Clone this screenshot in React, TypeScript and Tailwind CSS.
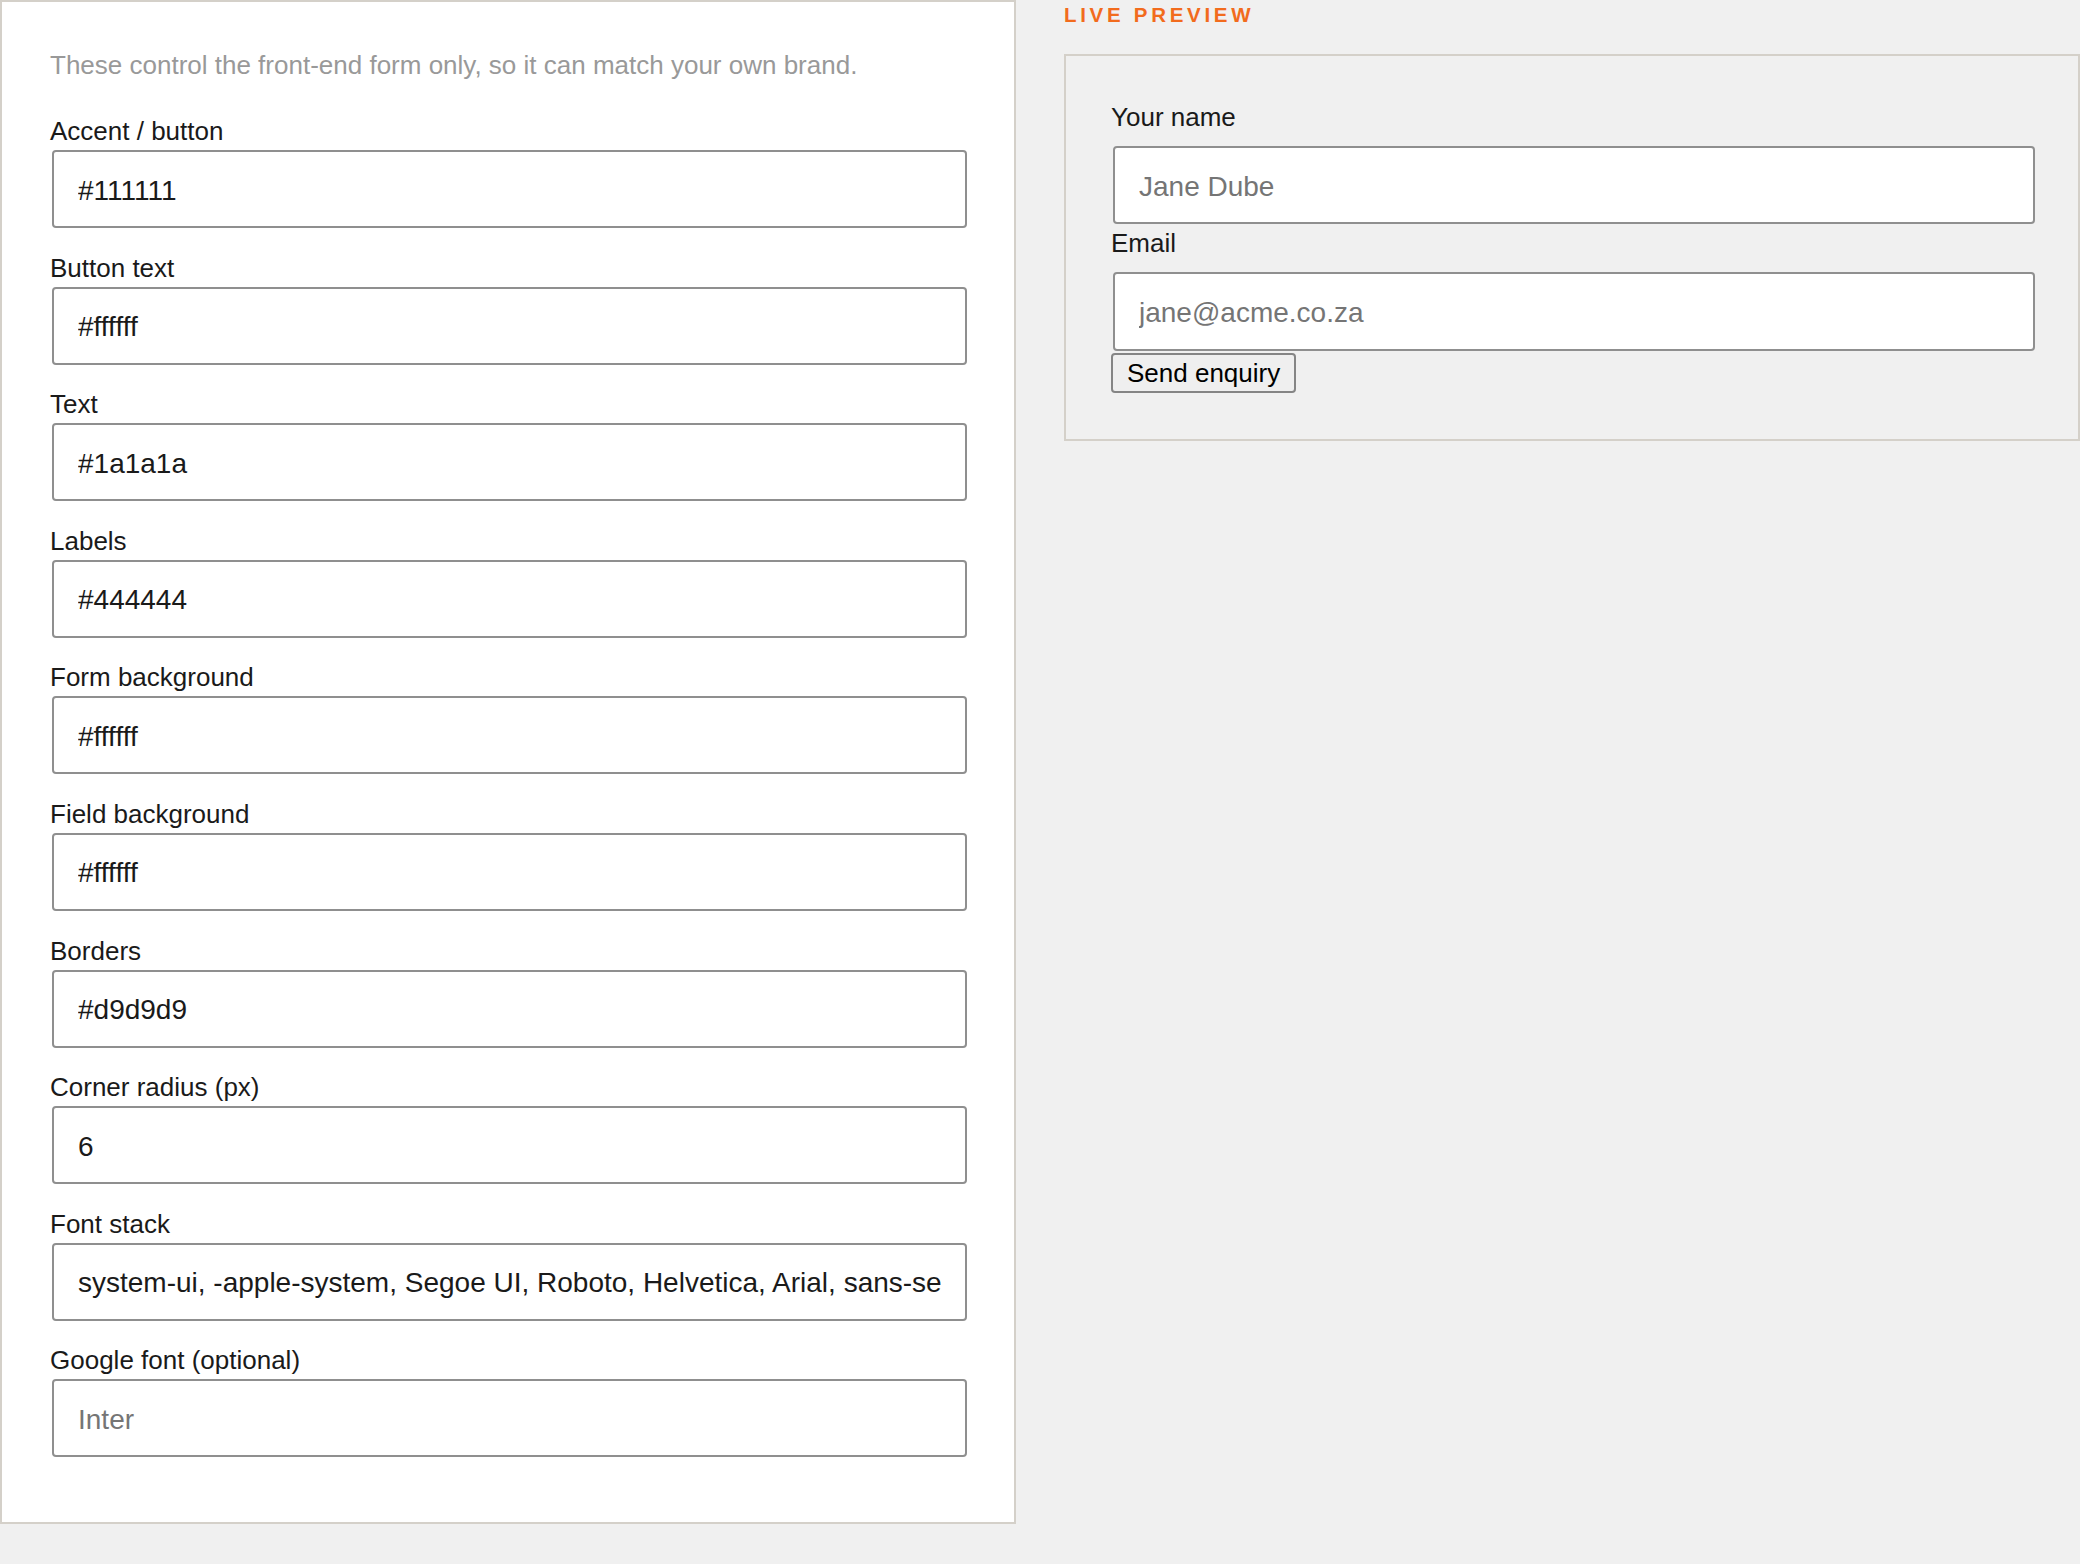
import React from "react";

const fields: { label: string; value?: string; placeholder?: string }[] = [
  { label: "Accent / button", value: "#111111" },
  { label: "Button text", value: "#ffffff" },
  { label: "Text", value: "#1a1a1a" },
  { label: "Labels", value: "#444444" },
  { label: "Form background", value: "#ffffff" },
  { label: "Field background", value: "#ffffff" },
  { label: "Borders", value: "#d9d9d9" },
  { label: "Corner radius (px)", value: "6" },
  {
    label: "Font stack",
    value: "system-ui, -apple-system, Segoe UI, Roboto, Helvetica, Arial, sans-serif",
  },
  { label: "Google font (optional)", placeholder: "Inter" },
];

const inputCls =
  "block ml-[2px] w-[calc(100%-2px)] h-[78px] px-[24px] pt-[3px] bg-white border-2 border-[#8f8f8f] rounded-[4px] text-[28px] text-[#1a1a1a] placeholder:text-[#757575] outline-none";

export default function App() {
  return (
    <div className="min-h-screen bg-[#f0f0f0] font-['Liberation_Sans',Arial,sans-serif] text-[26px] text-[#1a1a1a]">
      <div className="grid grid-cols-2 gap-[48px] items-start">
        {/* Colour settings */}
        <div className="bg-white border-2 border-[#d4d0c9] pt-[48px] pl-[48px] pr-[47px] pb-[65px]">
          <p className="leading-[normal] text-[#999999]">
            These control the front-end form only, so it can match your own brand.
          </p>

          <div className="mt-[35px] flex flex-col gap-[24.6px]">
            {fields.map((f) => (
              <div key={f.label}>
                <label className="block leading-[normal]">{f.label}</label>
                <input
                  className={`mt-[3px] ${inputCls}`}
                  defaultValue={f.value}
                  placeholder={f.placeholder}
                  readOnly
                />
              </div>
            ))}
          </div>
        </div>

        {/* Preview */}
        <div className="flex flex-col">
          <div className="mt-[3px] text-[20.5px] leading-[normal] font-bold tracking-[3.7px] text-[#f26b1d]">
            LIVE PREVIEW
          </div>
          <div className="mt-[27px] border-2 border-[#d4d0c9] bg-[#f0f0f0] pt-[46px] pl-[45px] pr-[43px] pb-[46px]">
            <label className="block leading-[normal]">Your name</label>
            <input className={`mt-[13px] ${inputCls}`} placeholder="Jane Dube" readOnly />
            <label className="block mt-[3.5px] leading-[normal]">Email</label>
            <input
              className={`mt-[13px] !h-[79px] ${inputCls}`}
              placeholder="jane@acme.co.za"
              readOnly
            />
            <button className="mt-[2px] h-[40px] px-[14px] bg-[#efefef] border-2 border-[#858585] rounded-[4px] leading-none text-black">
              Send enquiry
            </button>
          </div>
        </div>
      </div>
    </div>
  );
}
